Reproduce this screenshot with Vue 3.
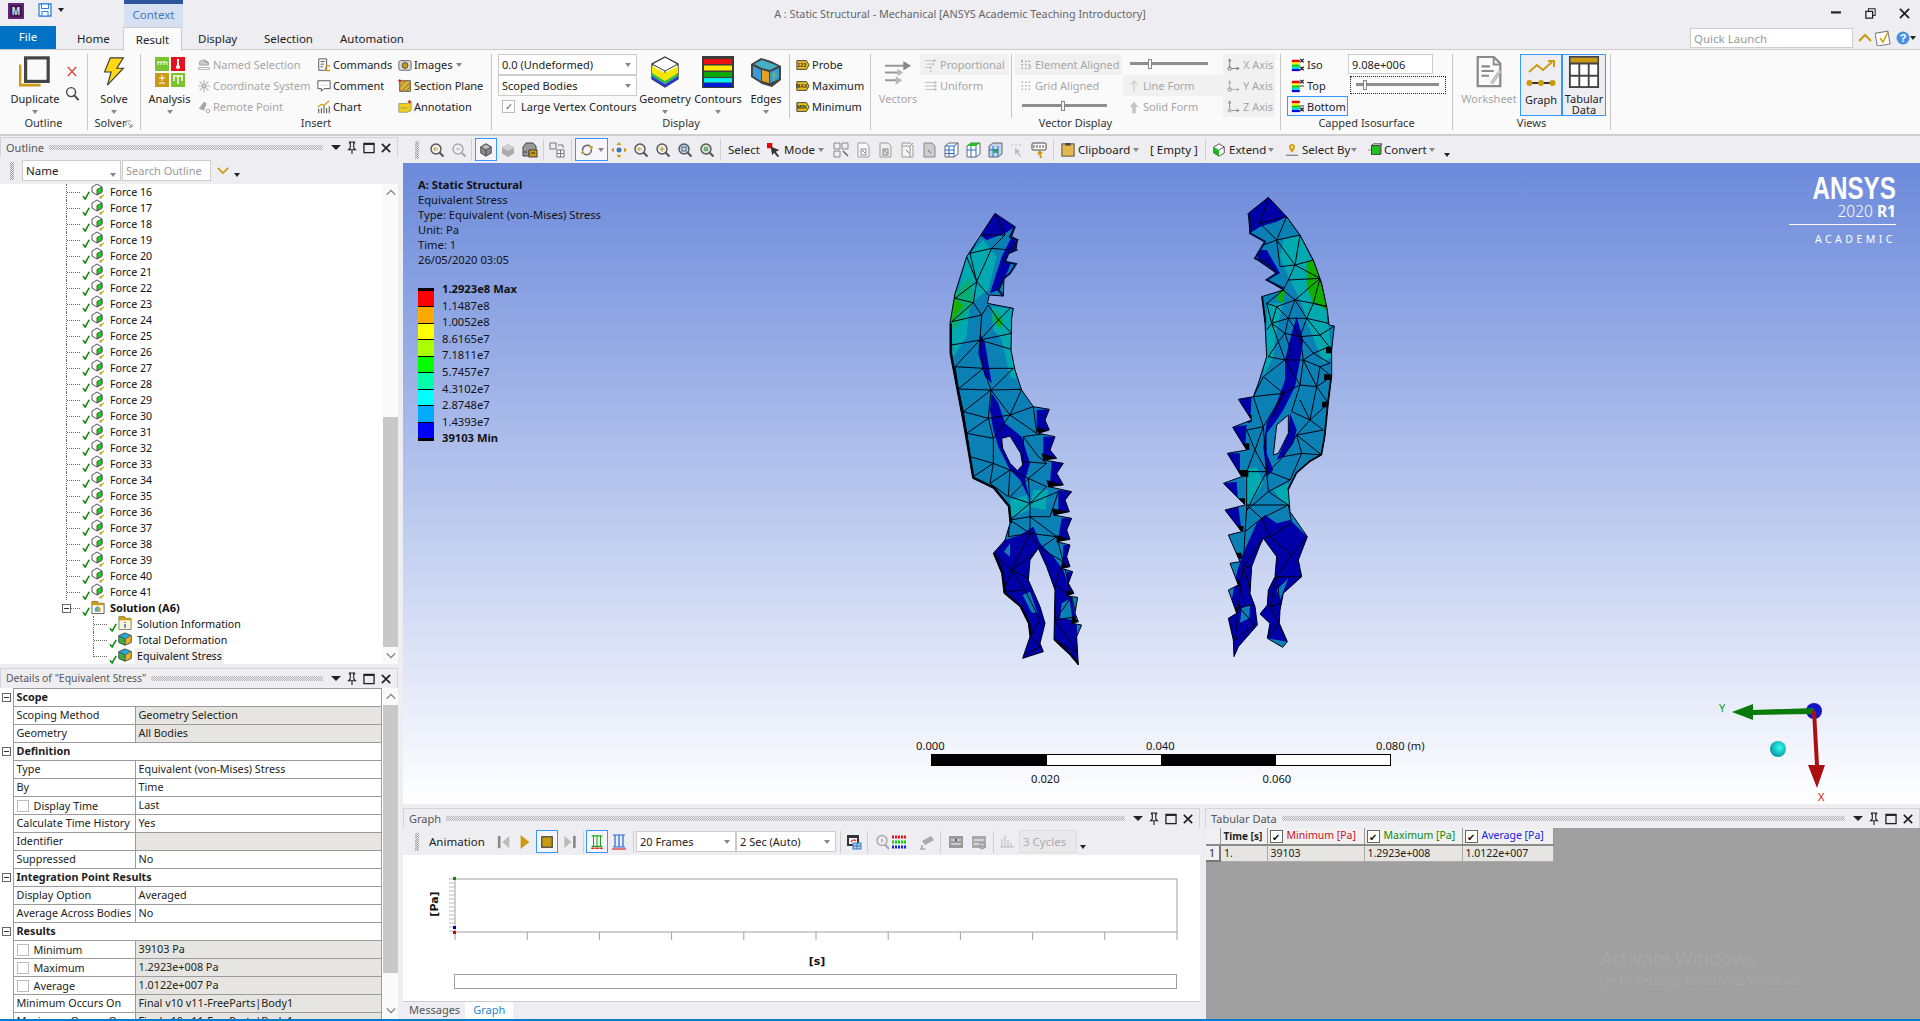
<script setup>
const forces = Array.from({ length: 26 }, (_, i) => 'Force ' + (16 + i))

const tag = (t) => `<path d="M1 3h11l3 5-3 5H1z" fill="#e8bd1c" stroke="#333"/><text x="6.5" y="10" font-size="6" font-weight="700" text-anchor="middle" font-family="Liberation Sans" fill="#333">${t}</text>`
const bands = `<rect x="1" y="2" width="9" height="3" fill="#e00"/><rect x="1" y="5" width="9" height="2.5" fill="#fe0"/><rect x="1" y="7.5" width="9" height="2.5" fill="#0c0"/><rect x="1" y="10" width="9" height="2.5" fill="#0dd"/><rect x="1" y="12.5" width="9" height="2.5" fill="#00d"/>`
const ex = (y) => `<path d="M10.5 ${y}l4 4m0-4l-4 4" stroke="#222" stroke-width="1.5"/>`
const dots = (c) => { let s = ''; for (const y of [3, 7, 11]) for (const x of [3, 7, 11]) s += `<rect x="${x}" y="${y}" width="1.6" height="1.6" fill="${c}"/>`; return s }

const ic = {
  dup: `<path d="M1 9v22h22" fill="none" stroke="#c99a12" stroke-width="3"/><rect x="7" y="2" width="24" height="25" fill="#fafafa" stroke="#444" stroke-width="3.4"/>`,
  x: `<path d="M2 2l9 10M11 2L2 12" stroke="#e33" stroke-width="1.5" fill="none"/>`,
  mag: `<circle cx="6.5" cy="6.5" r="4.8" fill="none" stroke="#444" stroke-width="1.5"/><path d="M10 10l4.5 5" stroke="#444" stroke-width="2"/>`,
  bolt: `<path d="M13 1h14l-7 11h7L10 30l4-14H7z" fill="#ffd913" stroke="#3a3a3a" stroke-width="1.2"/>`,
  analysis: `<rect x="0" y="0" width="14" height="14" fill="#7cc42e"/><path d="M2 5h10M3 5v3M6 5v3M9 5v3M12 5v3" stroke="#fff" fill="none"/><rect x="16" y="0" width="14" height="14" fill="#e8101c"/><path d="M23 2v7" stroke="#fff" stroke-width="2"/><circle cx="23" cy="10" r="2" fill="#fff"/><rect x="0" y="16" width="14" height="14" fill="#c99a12"/><path d="M4 21h6M7 18v6M4 26h6" stroke="#fff" fill="none"/><rect x="16" y="16" width="14" height="14" fill="#7cc42e"/><path d="M18 19h10M23 19v8M19 19v5M27 19v5" stroke="#fff" stroke-width="1.4" fill="none"/>`,
  named: `<path d="M3 8V4l5-2 5 3v3H3z" fill="#cfcfcf" stroke="#999"/><path d="M8 3l5 3" stroke="#888"/><rect x="2" y="11" width="12" height="2" fill="#fff" stroke="#aaa"/>`,
  coord: `<path d="M8 1v14M1 8h14M3 3l10 10M13 3L3 13" stroke="#b5b5b5" stroke-width="1.4" fill="none"/><circle cx="8" cy="8" r="1.6" fill="#fff" stroke="#999"/>`,
  remote: `<path d="M2 10l6-8 3 2-3 8z" fill="#a6a6a6"/><circle cx="12.5" cy="12.5" r="2" fill="#fff" stroke="#999"/>`,
  commands: `<path d="M2 1h9v13H2z" fill="#fff" stroke="#444"/><path d="M4 4h5M4 7h4M4 10h3" stroke="#444" fill="none"/><path d="M15 9.6a3 3 0 1 0 0 4.2" stroke="#c99a12" stroke-width="1.6" fill="none"/>`,
  comment: `<path d="M1 2h14v9H8l-3 3v-3H1z" fill="#fff" stroke="#444"/><path d="M5 7h1M8 7h1M11 7h1" stroke="#888"/>`,
  chart: `<path d="M2 15v-5M5 15V9M8 15V6M11 15V9M14 15V7" stroke="#555" stroke-width="1.2" fill="none"/><path d="M1 8l4-3 3 1 6-5" stroke="#c99a12" stroke-width="1.4" fill="none"/>`,
  images: `<rect x="1" y="3" width="14" height="11" rx="2" fill="#ddd" stroke="#555"/><circle cx="8" cy="8.5" r="3.4" fill="#c99a12" stroke="#444"/>`,
  section: `<rect x="2" y="2" width="12" height="12" fill="#d8b341" stroke="#444"/><path d="M4 14L14 4M2 9l7-7M9 14l5-5" stroke="#886600" fill="none"/><path d="M2 0v4M0 2h4" stroke="#e00"/>`,
  annot: `<path d="M1 4h10l4-2v10l-4 2H1z" fill="#efd016" stroke="#997"/><path d="M3 9h8" stroke="#996"/><path d="M13 0v4M11 2h4" stroke="#e00" stroke-width="1.2"/>`,
  probe: tag('123'), max: tag('MAX'), min: tag('MIN'),
  geom: `<path d="M16 1l13 7v15l-13 8-13-8V8z" fill="#fff" stroke="#333" stroke-width="1.3"/><path d="M3 10l13 7 13-7v7l-13 8-13-8z" fill="#f3e700"/><path d="M3 17l13 8 13-8v3l-13 8-13-8z" fill="#2fc12f"/><path d="M3 20l13 8 13-8v3l-13 8-13-8z" fill="#2438d8"/><path d="M3 8l13 7 13-7M16 15v2" fill="none" stroke="#333"/>`,
  contours: `<rect x="0" y="0" width="32" height="32" fill="#3a3a3a"/><rect x="2" y="3" width="28" height="5" fill="#ee1010"/><rect x="2" y="9.5" width="28" height="5" fill="#ffe600"/><rect x="2" y="16" width="28" height="5" fill="#0aa80a"/><rect x="2" y="22" width="28" height="4.5" fill="#0ee"/><rect x="2" y="27" width="28" height="4" fill="#0018d8"/>`,
  edges: `<path d="M1 8l10-6 10 3 10 5v14l-9 7-10-3-11-7z" fill="#444"/><path d="M3 10l8 4v11l-8-5z" fill="#3a9ad8"/><path d="M12 14l7 2v11l-7-2z" fill="#e6a020"/><path d="M20 16l9-4v11l-9 4z" fill="#3a9ad8"/><path d="M4 8l8-4 8 3 8 3-8 4-8-2z" fill="#45b0c8"/><path d="M22 19h5M24 16v9" stroke="#7c3" fill="none"/>`,
  vectors: `<path d="M0 7h21M0 14h17M0 22h14" stroke="#999" stroke-width="2" fill="none"/><path d="M19 2l8 5-8 5z" fill="#888"/><path d="M13 10l6 4-6 4z" fill="#bbb"/><path d="M11 18l7 4-7 5z" fill="#bbb"/>`,
  prop: `<path d="M1 3h11M3 7h8M1 11h7M6 15h3" stroke="#bbb" fill="none"/><path d="M11 1l3 2-3 2zM10 5l2 2-2 2zM7 9l2 2-2 2z" fill="#bbb"/>`,
  unif: `<path d="M1 4h12M1 8h12M1 12h12" stroke="#bbb" fill="none"/><path d="M12 2l3 2-3 2zM12 6l3 2-3 2zM12 10l3 2-3 2z" fill="#bbb"/>`,
  elem: dots('#999') + `<path d="M3 2l1 3M12 8l2 3" stroke="#999"/>`,
  grid: dots('#aaa'),
  line: `<path d="M8 15V3M4 7l4-5 4 5" stroke="#bbb" fill="none"/>`,
  solid: `<path d="M6 15V8H3l5-6 5 6h-3v7z" fill="#c4c4c4"/>`,
  xa: `<path d="M3 12V2M1.5 4l1.5-3 1.5 3M5 12h8M11 10.5l3 1.5-3 1.5" stroke="#777" fill="none"/><circle cx="3" cy="12" r="2" fill="none" stroke="#777"/>`,
  ya: `<path d="M3 12V3M1.5 5l1.5-3 1.5 3M5 12h8M11 10.5l3 1.5-3 1.5" stroke="#aaa" fill="none"/><circle cx="3" cy="12" r="2" fill="none" stroke="#888"/>`,
  za: `<path d="M3 12V2M1.5 4l1.5-3 1.5 3M5 12h8M11 10.5l3 1.5-3 1.5" stroke="#888" fill="none"/><circle cx="3" cy="12" r="2.4" fill="#bbb"/>`,
  iso: bands + ex(1) + ex(10),
  top: bands + ex(1) + `<path d="M10 8h5" stroke="#222"/>`,
  bot: bands + ex(10) + `<path d="M10 8h5" stroke="#222"/>`,
  ws: `<path d="M2 1h17l7 7v24H2z" fill="#fafafa" stroke="#8a8a8a" stroke-width="2.4"/><path d="M19 1v8h7" fill="none" stroke="#8a8a8a" stroke-width="2"/><path d="M6 11h9M6 16h13M6 21h8" stroke="#8a8a8a" stroke-width="2.2"/><path d="M16 28l9-13 2 1.5-9 13z" fill="#cfcfcf" stroke="#aaa"/>`,
  graph: `<path d="M3 13l8-7 6 5 9-8" fill="none" stroke="#c99a12" stroke-width="2"/><path d="M22 2h6v6" fill="none" stroke="#c99a12" stroke-width="2"/><path d="M3 24h24" stroke="#333" stroke-width="2"/><circle cx="3.5" cy="24" r="3" fill="#c99a12"/><circle cx="15" cy="24" r="3" fill="#c99a12"/><circle cx="26.5" cy="24" r="3" fill="#c99a12"/>`,
  tab: `<rect x="1" y="1" width="30" height="32" fill="#fff" stroke="#444" stroke-width="2"/><rect x="2" y="2" width="28" height="6" fill="#c99a12"/><path d="M1 8h30M1 21h30M11 8v25M21 8v25" stroke="#444" stroke-width="2" fill="none"/>`,
  zfit: `<circle cx="7" cy="7" r="5" fill="#eee" stroke="#555" stroke-width="1.4"/><path d="M10.5 10.5l4 4" stroke="#555" stroke-width="2.2"/><path d="M9 7H5M6.5 5L5 7l1.5 2" stroke="#c99a12" fill="none"/>`,
  zdim: `<circle cx="7" cy="7" r="5" fill="#eee" stroke="#aaa" stroke-width="1.4"/><path d="M10.5 10.5l4 4" stroke="#aaa" stroke-width="2.2"/><path d="M5 7h4" stroke="#aaa"/>`,
  zplus: `<circle cx="7" cy="7" r="5" fill="#eee" stroke="#555" stroke-width="1.4"/><path d="M10.5 10.5l4 4" stroke="#555" stroke-width="2.2"/><path d="M4.5 7h5M7 4.5v5" stroke="#c99a12" stroke-width="1.2"/>`,
  zbox: `<circle cx="7" cy="7" r="5" fill="#c8d4e8" stroke="#555" stroke-width="1.4"/><path d="M10.5 10.5l4 4" stroke="#555" stroke-width="2.2"/><rect x="5" y="5" width="4" height="4" fill="none" stroke="#567"/>`,
  zgreen: `<circle cx="7" cy="7" r="5" fill="#cfe0c8" stroke="#555" stroke-width="1.4"/><path d="M10.5 10.5l4 4" stroke="#555" stroke-width="2.2"/><rect x="5" y="5" width="4" height="4" fill="#7a7"/>`,
  cube: `<path d="M8 1l6 3.5v7L8 15l-6-3.5v-7z" fill="#888" stroke="#444"/><path d="M2 4.5L8 8l6-3.5-6-3.5z" fill="#bbb" stroke="#444"/><path d="M8 8v7" stroke="#444"/>`,
  cubel: `<path d="M8 2l6 3.5v6L8 15l-6-3.5v-6z" fill="#aaa"/><path d="M2 5.5L8 9l6-3.5L8 2z" fill="#d0d0d0"/>`,
  iso3: `<path d="M4 1h7l3 3v5H7v5H1V5z" fill="#999" stroke="#444"/><rect x="7" y="8" width="8" height="7" fill="#c99a12" stroke="#444"/><path d="M2 10h3M9 11h4" stroke="#333"/>`,
  view: `<rect x="1" y="1" width="6" height="6" fill="#eee" stroke="#777"/><rect x="8" y="8" width="7" height="7" fill="#fff" stroke="#777"/><path d="M8 11.5h7M11.5 8v7M9 3h5v3" stroke="#777" fill="none"/>`,
  rot: `<path d="M3 9a5.5 5.5 0 0 1 9-5M13 7a5.5 5.5 0 0 1-9 5" fill="none" stroke="#666" stroke-width="1.6"/><circle cx="13" cy="5" r="1.7" fill="#c99a12"/><circle cx="3" cy="11" r="1.7" fill="#c99a12"/>`,
  pan: `<path d="M8 0l2.5 3h-5zM8 16l2.5-3h-5zM0 8l3-2.500v5zM16 8l-3-2.500v5z" fill="#c99a12"/><circle cx="8" cy="8" r="2.500" fill="#3a78c8"/>`,
  cursor: `<rect x="0" y="0" width="6" height="6" fill="#e00"/><path d="M4 4l10 4-4 2 4 5-2 1-4-5-2 3z" fill="#333"/>`,
  p1: `<path d="M1 1h6v6H1zM9 1h6v6H9zM1 9h6v6H1z" fill="none" stroke="#888"/><path d="M10 9l5 5" stroke="#666" stroke-width="1.5"/>`,
  p2: `<path d="M3 1h8l3 3v11H3z" fill="#fff" stroke="#999"/><rect x="6" y="7" width="5" height="6" fill="none" stroke="#888"/><path d="M7 8l3 3" stroke="#777"/>`,
  p3: `<path d="M3 1h8l3 3v11H3z" fill="#eee" stroke="#999"/><rect x="6" y="7" width="5" height="6" fill="#ddd" stroke="#888"/><path d="M7 8l3 3" stroke="#777"/>`,
  p4: `<path d="M3 1h8l3 3v11H3z" fill="#f4f4f4" stroke="#999"/><path d="M3 4h8l3-3M11 4v11" stroke="#999" fill="none"/><path d="M7 8l3 3" stroke="#777"/>`,
  p5: `<path d="M3 1h8l3 3v11H3z" fill="#ccc" stroke="#888"/><path d="M7 8l3 3" stroke="#666"/>`,
  m1: `<path d="M2 4l4-3h9v11l-4 3H2z" fill="#fff" stroke="#666"/><path d="M2 8h9M6 4v11M11 4v11M2 11.500h9M2 4h9l4-3" stroke="#2a6ac8" fill="none"/>`,
  m2: `<path d="M2 4l4-3h9v11l-4 3H2z" fill="#fff" stroke="#666"/><path d="M2 4l4-3h9l-4 3z" fill="#22c01f"/><path d="M2 8h9M6 4v11M11 4v11" stroke="#2a6ac8" fill="none"/>`,
  m3: `<path d="M2 4l4-3h9v11l-4 3H2z" fill="#bfd4ef" stroke="#666"/><rect x="7" y="7" width="4" height="4" fill="#2fb52f"/><path d="M2 8h9M6 4v11M11 4v11" stroke="#2a6ac8" fill="none"/>`,
  xyz: `<path d="M2 3h12" stroke="#bbb" stroke-dasharray="2 2"/><path d="M6 6l5 3-2 1 3 4-1 1-3-4-2 2z" fill="#bbb"/>`,
  lab: `<rect x="1" y="1" width="14" height="7" rx="1" fill="#fff" stroke="#444"/><path d="M3 3v3M6 3v3M9 3v3M12 3v3" stroke="#444"/><path d="M8 8l4 3-2 1 1 4-2 0-1-4-2 1z" fill="#c99a12"/>`,
  clip: `<rect x="1" y="1" width="14" height="14" fill="#e2b94e" stroke="#444"/><rect x="5" y="0" width="6" height="3" fill="#444"/>`,
  extend: `<path d="M8 1l6 3.500v7L8 15l-6-3.500v-7z" fill="#fff" stroke="#444"/><path d="M2 4.500L8 8v7l-6-3.500z" fill="#1fb520"/><path d="M8 8l6-3.500" stroke="#444"/><path d="M8 0l2 2" stroke="#c99a12"/>`,
  sel: `<path d="M8 1a3.500 3.500 0 0 1 3.500 3.500C11.500 7 8 11 8 11S4.500 7 4.500 4.500A3.500 3.500 0 0 1 8 1z" fill="#d4a017"/><circle cx="8" cy="4.500" r="1.200" fill="#fff"/><path d="M1 14h14" stroke="#555"/>`,
  conv: `<path d="M0 8h4" stroke="#888"/><rect x="4" y="3" width="10" height="10" fill="#1cc41c" stroke="#333"/><path d="M4 3l2-2h10v10l-2 2M14 3l2-2" fill="none" stroke="#333"/>`,
  first: `<rect x="0" y="1" width="3" height="14" fill="#888"/><path d="M13 1L5 8l8 7z" fill="#bbb"/>`,
  play: `<path d="M2 0l10 8-10 8z" fill="#c99a12"/>`,
  last: `<path d="M1 1l8 7-8 7z" fill="#bbb"/><rect x="11" y="1" width="3" height="14" fill="#888"/>`,
  stop: `<rect x="2" y="2" width="12" height="12" fill="#c99a12" stroke="#444" stroke-width="1.4"/>`,
  fr1: `<path d="M2 1h12M2 13h12M4 1v12M8 1v12M12 1v12" stroke="#18a818" fill="none" stroke-width="1.2"/><path d="M2 16l1-2 1 2zM7 16l1-2 1 2zM12 16l1-2 1 2z" fill="#d00"/><rect x="1" y="14.500" width="14" height="1" fill="#d00"/>`,
  fr2: `<path d="M2 1h12M2 13h12M4 1v12M8 1v12M12 1v12" stroke="#2268d8" fill="none" stroke-width="1.2"/><rect x="1" y="14.500" width="14" height="1" fill="#d00"/>`,
  film: `<rect x="1" y="1" width="12" height="11" fill="#333"/><rect x="3" y="4" width="8" height="6" fill="#fff"/><path d="M5 8a3 3 0 0 1 5-1" stroke="#e33" stroke-width="1.4" fill="none"/><rect x="7" y="9" width="8" height="6" fill="#bcd" stroke="#37c"/><path d="M11 9v6M7 12h8" stroke="#37c"/>`,
  mg: `<circle cx="7" cy="6.500" r="5" fill="none" stroke="#aaa" stroke-width="1.4"/><path d="M10 10.500l4 4.500" stroke="#aaa" stroke-width="2"/><path d="M6 4l3 2.500-3 2.500z" fill="#bbb"/>`,
  rgb: `<path d="M1 3h14" stroke="#e11" stroke-width="3" stroke-dasharray="2 1"/><path d="M1 8h14" stroke="#1c1" stroke-width="3" stroke-dasharray="2 1"/><path d="M1 13h14" stroke="#12d" stroke-width="3" stroke-dasharray="2 1"/>`,
  cam: `<path d="M3 7l9-5 3 4-9 5z" fill="#aaa"/><path d="M3 15v-4M1 15h5" stroke="#aaa" stroke-width="1.6"/>`,
  flm: `<rect x="1" y="2" width="14" height="12" fill="#999"/><path d="M3 6h10M3 10h10" stroke="#fff"/><rect x="7" y="5" width="2" height="2" fill="#555"/>`,
  flm2: `<rect x="1" y="2" width="14" height="12" fill="#aaa"/><path d="M3 6h10M3 10h10" stroke="#fff"/><circle cx="11" cy="12" r="3" fill="none" stroke="#999"/>`,
  cyc: `<path d="M1 13h14M3 13V5M6 13V2M9 13V6M12 13V9" stroke="#bbb" fill="none"/>`,
  chevup: `<path d="M1 6l5-5 5 5" fill="none" stroke="#777" stroke-width="1.4"/>`,
  chevdn: `<path d="M1 1l5 5 5-5" fill="none" stroke="#777" stroke-width="1.4"/>`,
  pin: `<path d="M4 1h6v1h-1v6l2 2H3l2-2V2H4zM7 10v5" fill="none" stroke="#222" stroke-width="1.3"/>`,
  sq: `<rect x="1" y="2" width="11" height="10" fill="none" stroke="#222" stroke-width="1.4"/><path d="M1 3h11" stroke="#222" stroke-width="1.4"/>`,
  cls: `<path d="M2 2l9 9M11 2l-9 9" stroke="#222" stroke-width="1.8"/>`,
  ok: `<path d="M1 8l2.500 3 4.500-8" stroke="#0a8a0a" stroke-width="1.7" fill="none"/>`,
  force: `<path d="M6 1l5 3v5L6 12 1 9V4z" fill="#fff" stroke="#555"/><path d="M6 6.500V12l5-3V4z" fill="#22d022" stroke="#555"/><path d="M9 15l4-3M11 15h-2v-2" stroke="#d9a520" fill="none" stroke-width="1.2"/>`,
  folder: `<path d="M1 2h6l1 2h6v11H1z" fill="#fff" stroke="#555"/><path d="M1 2h6l1 2h6v2H1z" fill="#c99a12"/><path d="M4 9l3-2 3 2v4H4z" fill="#3ab0c8"/><path d="M7 7l3 2v4H7z" fill="#e0a020"/>`,
  info: `<path d="M1 1h6l1 2h6v12H1z" fill="#fdf6d0" stroke="#777"/><path d="M1 1h6l1 2h6v2H1z" fill="#c99a12"/><path d="M7.500 7v1M7.500 9v4" stroke="#2a6ac8" stroke-width="1.6"/>`,
  result: `<path d="M8 1l7 3v8l-7 3-7-3V4z" fill="#2ba8d8" stroke="#444"/><path d="M8 8l7-4v8l-7 3z" fill="#e8b020" stroke="#444" stroke-width=".6"/><path d="M8 8v7L1 12V4z" fill="#3fb040" stroke="#444" stroke-width=".6"/><path d="M3 6l4 2v3" stroke="#2a6ac8" fill="none"/>`,
  min_: `<path d="M0 1h9" stroke="#222" stroke-width="2"/>`,
  rest: `<rect x="1" y="4" width="8" height="8" fill="none" stroke="#222" stroke-width="1.5"/><path d="M4 4V1h8v8H9" fill="none" stroke="#222" stroke-width="1.2"/>`,
  close: `<path d="M1 1l10 10M11 1L1 11" stroke="#222" stroke-width="2"/>`,
  up: `<path d="M1 8l6-6 6 6" fill="none" stroke="#c99a12" stroke-width="2"/>`,
  chkbox: `<rect x="1" y="2" width="13" height="13" fill="#fff" stroke="#777" transform="rotate(-10 8 8)"/><path d="M5 8l3 4 5-10" stroke="#d4a017" stroke-width="1.6" fill="none"/>`,
  help: `<circle cx="7" cy="7" r="6.500" fill="#4a90e2"/><text x="7" y="11" text-anchor="middle" font-size="11" font-weight="700" font-family="Liberation Sans" fill="#fff">?</text>`,
  launch: `<path d="M0 0h8v8H0z" fill="none"/><path d="M1 1h5M1 1v5" stroke="#999"/><path d="M3 3l4 4M7 4v3H4" stroke="#888" fill="none"/>`,
  appm: `<rect width="16" height="16" fill="#68217a"/><rect x="2" y="2" width="12" height="12" fill="#3f1a4e"/><text x="8" y="12" font-size="10" font-weight="700" text-anchor="middle" font-family="Liberation Sans" fill="#ddd">M</text>`,
  save: `<path d="M1 1h12v12H1z" fill="#fff" stroke="#2f80d8" stroke-width="1.3"/><rect x="3.500" y="1" width="7" height="4.500" fill="#fff" stroke="#2f80d8"/><rect x="4" y="8.500" width="6" height="4.500" fill="#fff" stroke="#2f80d8"/>`
}

const details = [
  { s: 'Scope' },
  { l: 'Scoping Method', v: 'Geometry Selection', g: 1 },
  { l: 'Geometry', v: 'All Bodies', g: 1 },
  { s: 'Definition' },
  { l: 'Type', v: 'Equivalent (von-Mises) Stress' },
  { l: 'By', v: 'Time' },
  { l: 'Display Time', v: 'Last', c: 1 },
  { l: 'Calculate Time History', v: 'Yes' },
  { l: 'Identifier', v: '', g: 1 },
  { l: 'Suppressed', v: 'No' },
  { s: 'Integration Point Results' },
  { l: 'Display Option', v: 'Averaged' },
  { l: 'Average Across Bodies', v: 'No' },
  { s: 'Results' },
  { l: 'Minimum', v: '39103 Pa', c: 1, g: 1 },
  { l: 'Maximum', v: '1.2923e+008 Pa', c: 1, g: 1 },
  { l: 'Average', v: '1.0122e+007 Pa', c: 1, g: 1 },
  { l: 'Minimum Occurs On', v: 'Final v10 v11-FreeParts|Body1', g: 1 },
  { l: 'Maximum Occurs On', v: 'Final v10 v11-FreeParts|Body1', g: 1 }
]

const legend = [
  { t: '1.2923e8 Max', b: 1 }, { t: '1.1487e8' }, { t: '1.0052e8' }, { t: '8.6165e7' }, { t: '7.1811e7' },
  { t: '5.7457e7' }, { t: '4.3102e7' }, { t: '2.8748e7' }, { t: '1.4393e7' }, { t: '39103 Min', b: 1 }
]
const legendColors = ['#f00', '#ffaa00', '#ff0', '#aaff00', '#0f0', '#00ffaa', '#0ff', '#00aaff', '#00f']

const xTicks = Array.from({ length: 11 }, (_, i) => 52 + i * 72.2)
const yTicks = Array.from({ length: 14 }, (_, i) => 24 + i * 4)

const leftOutline = 'M195 70L255 110L245 140L262 150L258 180L235 190L225 215L258 222L240 250L222 265L220 318L178 315L172 340L250 355L245 385L243 480L255 540L275 600L310 650L358 658L345 690L358 720L325 730L375 740L360 780L380 805L340 810L400 820L380 850L400 885L355 890L425 905L405 930L418 965L370 975L425 985L410 1020L420 1048L380 1055L420 1065L410 1100L420 1130L395 1135L428 1145L415 1180L432 1210L410 1218L443 1222L435 1270L445 1295L425 1300L455 1305L440 1340L445 1425L420 1395L372 1350L375 1200L350 1130L325 1075L300 1110L295 1170L330 1250L345 1300L330 1360L340 1385L278 1405L300 1340L295 1300L270 1250L222 1210L215 1150L190 1090L225 1050L240 1000L235 950L190 895L128 865L100 700L60 490L60 400L75 310L110 200Z M215 745L240 738L272 790L278 825L262 842L240 820L218 775Z'
const leftTeal = ['110,200 160,150 200,200 175,300 120,340 110,440 70,500 60,400', '185,350 245,355 245,500 260,570 240,560 215,450 190,420', '310,900 355,900 345,960 300,950', '240,930 290,915 300,960 245,980']
const leftGreen = ['75,310 120,260 130,340 75,420 60,400', '190,350 225,390 210,420 185,390']
const leftBright = ['72,325 100,345 65,395', '195,375 218,395 205,412']
const leftDark = ['195,70 150,135 170,150 225,130 255,110', '245,140 262,160 235,240 205,300 180,310 215,200', '150,430 165,460 185,580 165,560 145,490', '185,610 205,640 225,700 275,740 300,820 285,870 300,930 270,870 240,840 205,770 190,720 180,660', '190,1090 225,1050 270,1035 310,1010 330,1060 370,1100 400,1140 420,1200 440,1300 445,1425 372,1350 375,1200 325,1075 300,1110 295,1170 330,1250 345,1300 340,1385 278,1405 300,1340 270,1250 222,1210 215,1150', '320,660 358,658 345,690 358,720 320,725', '340,740 375,740 360,780 380,805 340,800', '365,815 400,820 380,850 400,885 360,880', '385,900 425,905 405,930 418,965 385,960', '395,985 425,985 410,1020 420,1048 385,1045', '400,1065 420,1065 420,1130 398,1130', '410,1145 428,1145 432,1210 410,1210']
const leftLight = ['300,1205 322,1268 305,1268 278,1215', '395,1240 418,1228 428,1290 390,1285', '240,1060 222,1085 240,1100']
const leftBlack = ['320,710 358,722 325,730', '335,790 380,805 340,812', '350,870 400,885 355,892', '365,955 418,965 370,975', '380,1035 420,1048 380,1055', '395,1115 420,1130 395,1137', '410,1200 432,1210 410,1218', '425,1275 445,1295 425,1300']
const leftEdge = 'M60 400L60 490L100 700L128 865L190 895L235 950L240 1000M190 1090L215 1150L222 1210L270 1250L295 1300L300 1340M372 1350L420 1395L445 1425'
const leftRough = 'M255 110L240 140L262 150L245 175L258 180L235 190L225 215L258 222L240 250L222 265L205 300L220 318'
const leftMesh = 'M195 70L150 135L225 135L195 70M150 135L120 190L185 175L225 135M185 175L240 180M120 190L140 275L185 175M110 200L140 275M140 275L75 325M140 275L130 338L75 325M140 275L175 315M130 338L155 375L175 345L205 390M130 338L65 395M155 375L65 395M155 375L150 450L65 465M205 390L150 450M205 390L245 430M205 390L245 350M150 450L245 430M150 450L75 530L160 535L150 450M160 535L250 535M150 450L250 480M75 530L85 597L160 535M160 535L183 600M250 535L183 600L275 598M85 597L183 600M85 597L100 665L183 600M183 600L175 685L100 665M175 685L240 675L183 600M240 675L275 598M240 675L310 650M175 685L110 730L190 745L175 685M190 745L240 675M120 800L190 820L190 745M190 820L130 860M190 820L180 880L240 840L190 820M240 840L235 920L180 880M240 840L295 865L240 920L300 940L295 865L350 820L280 815M280 740L280 815M350 730L280 740L325 800L350 820M300 940L350 890L295 865M300 940L240 990L300 980L300 940L385 905L360 980L300 980L380 1040L300 1030L240 990M300 980L300 1030L235 1040L240 990M300 1030L245 1140L190 1090M245 1140L330 1075L300 1030M245 1140L295 1165M245 1140L220 1205L285 1200L245 1140M330 1075L400 1115L380 1040L330 1075M400 1115L375 1185L425 1220L400 1115M375 1185L375 1290L440 1280L425 1220L375 1290M375 1290L445 1390L375 1350M285 1200L330 1290L300 1340L330 1370L285 1395M110 730L120 800L110 730M110 730L100 665M310 650L320 730L240 675'

const rightOutline = 'M1015 22L1070 80L1110 135L1150 210L1175 280L1192 360L1197 405L1213 408L1205 480L1205 560L1195 640L1185 740L1175 795L1140 815L1100 850L1075 900L1080 965L1132 1040L1105 1110L1115 1160L1060 1210L1050 1260L1048 1300L1072 1355L1058 1372L1012 1345L1020 1300L990 1272L1012 1245L1015 1200L1035 1160L1040 1100L1000 1045L990 1065L965 1130L960 1210L975 1250L982 1305L925 1370L912 1400L910 1350L895 1285L920 1270L895 1200L925 1185L900 1120L930 1115L895 1035L935 1025L885 960L945 945L880 880L935 860L892 790L950 780L908 712L965 690L925 628L970 620L985 580L1010 500L1005 400L995 320L1060 300L1010 270L1040 250L975 205L990 180L1005 155L960 130L955 70Z M1075 675L1040 705L1030 795L1045 790L1075 730Z'
const rightTeal = ['1060,150 1110,135 1175,280 1195,400 1130,380 1100,310 1075,260 1050,200', '1010,340 1060,340 1040,420 1030,500 1000,560 1010,450', '1120,370 1195,400 1205,500 1180,520 1140,420', '945,840 980,830 1000,880 950,960', '1080,965 1030,900 1075,880']
const rightGreen = ['1130,215 1150,210 1170,270 1192,360 1150,340 1130,290', '1050,300 1065,300 1060,340 1040,330']
const rightDark = ['1015,22 1070,80 1040,95 990,110 960,130 955,70', '975,180 1010,180 1050,250 1010,270', '1100,380 1120,450 1110,510 1095,590 1060,660 1040,690 1010,730 1010,790 1030,840 1010,860 1000,770 1010,700 1040,640 1065,570 1065,510 1085,430', '1080,670 1100,720 1090,760 1060,800 1040,810 1075,730', '1132,1040 1105,1110 1115,1160 1060,1210 1048,1300 1072,1355 1012,1345 990,1272 1015,1200 1040,1100 1000,1045 965,1130 975,1250 982,1305 912,1400 895,1285 920,1150 935,1100 980,1000 1005,975 1040,1000 1080,990', '930,620 965,620 960,700 930,690', '910,710 950,705 945,780 910,780', '895,790 930,790 930,860 895,860', '885,880 920,875 925,945 890,945', '885,960 925,950 935,1025 895,1030']
const rightLight = ['935,1255 960,1245 958,1285 930,1298', '1040,1200 1075,1165 1050,1230']
const rightBlack = ['1188,470 1208,470 1205,490 1188,490', '1182,553 1202,553 1202,570 1182,570', '1176,635 1196,635 1196,652 1176,652', '915,760 958,760 958,780 910,780', '925,675 965,675 965,695 925,695', '900,840 955,840 955,860 895,860', '890,925 945,925 945,945 890,945', '895,1008 940,1008 940,1025 895,1025', '905,1088 935,1088 935,1106 905,1106', '905,1170 930,1170 930,1188 905,1188', '895,1252 922,1252 922,1270 895,1270']
const rightEdge = 'M1205 560L1195 640L1185 740L1175 795L1140 815L1100 850L1075 900M995 320L1005 400'
const rightRough = 'M955 70L965 100L960 130L1005 155L990 180L975 205L1005 215L1040 250L1010 270L1060 295'
const rightMesh = 'M1015 22L990 100L1070 80L1015 22M990 100L1040 150L1070 80L1110 135L1040 150M1040 150L1000 165M1040 150L1095 225L1110 135L1150 210L1095 225M1040 150L1050 230L1095 225M1095 225L1075 270L1170 265L1095 225M1150 210L1170 265M1075 270L1060 300L1095 330L1170 265L1150 340L1095 330M1170 265L1192 350L1150 340M1060 300L1010 340L1040 350L1095 330M1010 340L1025 400L1040 350L1075 385L1095 330L1130 385L1150 340L1192 350L1195 400L1130 385L1075 385M1025 400L1010 420M1025 400L1075 385L1065 430L1025 400L1045 455L1065 430L1110 440L1075 385M1130 385L1110 440L1170 435L1130 385M1170 435L1213 408M1170 435L1197 470L1150 490L1110 440L1120 510L1150 490L1200 520L1170 530L1120 510M1045 455L1015 500L1065 510L1045 455M1065 430L1085 490L1065 510L1120 510L1110 585L1065 510L1000 560L1060 610L1110 585L1160 590L1170 530L1205 560L1160 590L1120 510M1000 560L970 620L1060 610L1000 710L970 620M1060 610L1030 680M1110 585L1085 665L1140 690L1160 590L1195 640L1140 690L1110 630M1140 690L1180 720L1100 735L1140 690M1100 735L1175 795L1115 790L1100 735L1060 800L1115 790L1080 870L1015 845L1060 800M1000 710L950 720L975 780L1000 710M1000 710L1010 845L975 780L950 845L1010 845L950 960L950 845M1010 845L1015 905L950 960M1015 905L1075 945L950 945M1015 905L1080 870M950 945L995 985L1075 945M995 985L945 1025L950 960M995 985L1020 1040L1085 1000L1075 945M1020 1040L1085 1095L1132 1040M1085 1095L1040 1160L1115 1160M1020 1040L1000 1045L940 1130L945 1025M940 1130L965 1130M940 1130L925 1250L975 1245L940 1130M925 1250L975 1305L915 1350L925 1250M1040 1160L1020 1250L1050 1240L1040 1160M1020 1250L1045 1300L1015 1340M1045 1300L1072 1355'
</script>

<template>
  <div class="app">
    <!-- title -->
    <header class="titlebar">
      <div class="tb-left">
        <svg class="appm" viewBox="0 0 16 16" v-html="ic.appm"></svg>
        <svg class="save" viewBox="0 0 14 14" v-html="ic.save"></svg>
        <span class="car dk ml6"></span>
        <div class="context"><span>Context</span></div>
      </div>
      <div class="title">A : Static Structural - Mechanical [ANSYS Academic Teaching Introductory]</div>
      <div class="tb-right">
        <svg class="wc" viewBox="0 0 10 4" v-html="ic.min_"></svg>
        <svg class="wc" viewBox="0 0 13 13" v-html="ic.rest"></svg>
        <svg class="wc" viewBox="0 0 12 12" v-html="ic.close"></svg>
      </div>
    </header>
    <nav class="tabs">
      <div class="file">File</div>
      <div class="tab home">Home</div>
      <div class="tab active">Result</div>
      <div class="tab disp">Display</div>
      <div class="tab sel">Selection</div>
      <div class="tab auto">Automation</div>
      <div class="qlaunch">
        <div class="qinput">Quick Launch</div>
        <svg class="q-up" viewBox="0 0 14 10" v-html="ic.up"></svg>
        <svg class="q-chk" viewBox="0 0 16 16" v-html="ic.chkbox"></svg>
        <svg class="q-help" viewBox="0 0 14 14" v-html="ic.help"></svg>
        <span class="car dk"></span>
      </div>
    </nav>

    <!-- ribbon -->
    <section class="ribbon">
      <div class="grp g-outline">
        <div class="body pl10">
          <div class="big w50">
            <div class="big-i"><svg class="b32" viewBox="0 0 34 34" v-html="ic.dup"></svg></div>
            <div class="big-t">Duplicate</div><span class="car"></span>
          </div>
          <div class="col-x">
            <svg class="xmark" viewBox="0 0 13 14" v-html="ic.x"></svg>
            <svg class="xmag" viewBox="0 0 16 16" v-html="ic.mag"></svg>
          </div>
        </div>
        <div class="lab">Outline</div>
      </div>
      <div class="grp g-solver">
        <div class="body">
          <div class="big w52">
            <div class="big-i"><svg class="b32" viewBox="0 0 34 32" v-html="ic.bolt"></svg></div>
            <div class="big-t">Solve</div><span class="car"></span>
          </div>
        </div>
        <div class="lab">Solver<svg class="launch" viewBox="0 0 8 8" v-html="ic.launch"></svg></div>
      </div>
      <div class="grp g-insert">
        <div class="body pl8">
          <div class="big w41">
            <div class="big-i"><svg class="b30" viewBox="0 0 30 30" v-html="ic.analysis"></svg></div>
            <div class="big-t">Analysis</div><span class="car"></span>
          </div>
          <div class="col c-named">
            <div class="sm dis np"><svg class="i" viewBox="0 0 16 16" v-html="ic.named"></svg>Named Selection</div>
            <div class="sm dis np"><svg class="i" viewBox="0 0 16 16" v-html="ic.coord"></svg>Coordinate System</div>
            <div class="sm dis np"><svg class="i" viewBox="0 0 16 16" v-html="ic.remote"></svg>Remote Point</div>
          </div>
          <div class="col c-cmd">
            <div class="sm"><svg class="i" viewBox="0 0 16 16" v-html="ic.commands"></svg>Commands</div>
            <div class="sm"><svg class="i" viewBox="0 0 16 16" v-html="ic.comment"></svg>Comment</div>
            <div class="sm"><svg class="i" viewBox="0 0 16 16" v-html="ic.chart"></svg>Chart</div>
          </div>
          <div class="col">
            <div class="sm"><svg class="i" viewBox="0 0 16 16" v-html="ic.images"></svg>Images<span class="car"></span></div>
            <div class="sm"><svg class="i" viewBox="0 0 16 16" v-html="ic.section"></svg>Section Plane</div>
            <div class="sm"><svg class="i" viewBox="0 0 16 16" v-html="ic.annot"></svg>Annotation</div>
          </div>
        </div>
        <div class="lab">Insert</div>
      </div>
      <div class="grp g-display">
        <div class="body pl6">
          <div class="col c-dd">
            <div class="dd"><span>0.0 (Undeformed)</span><span class="car"></span></div>
            <div class="dd"><span>Scoped Bodies</span><span class="car"></span></div>
            <div class="chkrow"><span class="cb on">✓</span>Large Vertex Contours</div>
          </div>
          <div class="big w48 ml4">
            <div class="big-i"><svg class="b32" viewBox="0 0 32 32" v-html="ic.geom"></svg></div>
            <div class="big-t">Geometry</div><span class="car"></span>
          </div>
          <div class="big w48 ml5">
            <div class="big-i"><svg class="b32" viewBox="0 0 32 32" v-html="ic.contours"></svg></div>
            <div class="big-t">Contours</div><span class="car"></span>
          </div>
          <div class="big w32 ml8">
            <div class="big-i"><svg class="b32" viewBox="0 0 32 32" v-html="ic.edges"></svg></div>
            <div class="big-t">Edges</div><span class="car"></span>
          </div>
          <span class="vsep"></span>
          <div class="col">
            <div class="sm"><svg class="i" viewBox="0 0 16 16" v-html="ic.probe"></svg>Probe</div>
            <div class="sm"><svg class="i" viewBox="0 0 16 16" v-html="ic.max"></svg>Maximum</div>
            <div class="sm"><svg class="i" viewBox="0 0 16 16" v-html="ic.min"></svg>Minimum</div>
          </div>
        </div>
        <div class="lab">Display</div>
      </div>
      <div class="grp g-vector">
        <div class="body pl9">
          <div class="big w36 dis">
            <div class="big-i"><svg class="b28" viewBox="0 0 28 28" v-html="ic.vectors"></svg></div>
            <div class="big-t">Vectors</div>
          </div>
          <div class="col c-prop">
            <div class="sm dis hl"><svg class="i" viewBox="0 0 16 16" v-html="ic.prop"></svg>Proportional</div>
            <div class="sm dis"><svg class="i" viewBox="0 0 16 16" v-html="ic.unif"></svg>Uniform</div>
          </div>
          <span class="vsep2"></span>
          <div class="col c-elem">
            <div class="sm dis hl"><svg class="i" viewBox="0 0 16 16" v-html="ic.elem"></svg>Element Aligned</div>
            <div class="sm dis"><svg class="i" viewBox="0 0 16 16" v-html="ic.grid"></svg>Grid Aligned</div>
            <div class="slider s1"><i></i></div>
          </div>
          <div class="col c-line">
            <div class="slider s2"><i></i></div>
            <div class="sm dis hl"><svg class="i" viewBox="0 0 16 16" v-html="ic.line"></svg>Line Form</div>
            <div class="sm dis"><svg class="i" viewBox="0 0 16 16" v-html="ic.solid"></svg>Solid Form</div>
          </div>
          <div class="col c-axis hl">
            <div class="sm dis"><svg class="i" viewBox="0 0 16 16" v-html="ic.xa"></svg>X Axis</div>
            <div class="sm dis"><svg class="i" viewBox="0 0 16 16" v-html="ic.ya"></svg>Y Axis</div>
            <div class="sm dis"><svg class="i" viewBox="0 0 16 16" v-html="ic.za"></svg>Z Axis</div>
          </div>
        </div>
        <div class="lab">Vector Display</div>
      </div>
      <div class="grp g-capped">
        <div class="body pl6">
          <div class="col c-iso">
            <div class="sm"><svg class="i" viewBox="0 0 16 16" v-html="ic.iso"></svg>Iso</div>
            <div class="sm"><svg class="i" viewBox="0 0 16 16" v-html="ic.top"></svg>Top</div>
            <div class="sm selbox"><svg class="i" viewBox="0 0 16 16" v-html="ic.bot"></svg>Bottom</div>
          </div>
          <div class="col c-isoin">
            <div class="isoval">9.08e+006</div>
            <div class="slider s3"><i></i></div>
          </div>
        </div>
        <div class="lab">Capped Isosurface</div>
      </div>
      <div class="grp g-views">
        <div class="body pl8">
          <div class="big w56 dis">
            <div class="big-i"><svg class="b32" viewBox="0 0 28 34" v-html="ic.ws"></svg></div>
            <div class="big-t">Worksheet</div>
          </div>
          <div class="big vbtn vgraph">
            <div class="big-i"><svg class="b30" viewBox="0 0 30 28" v-html="ic.graph"></svg></div>
            <div class="big-t">Graph</div>
          </div>
          <div class="big vbtn vtab">
            <div class="big-i"><svg class="b32" viewBox="0 0 32 34" v-html="ic.tab"></svg></div>
            <div class="big-t two">Tabular<br>Data</div>
          </div>
        </div>
        <div class="lab">Views</div>
      </div>
    </section>

    <div class="main">
      <!-- left -->
      <aside class="left">
        <div class="phdr">
          <span class="pt">Outline</span><span class="dotgrip"></span><span class="car dk lg"></span>
          <svg class="pi" viewBox="0 0 14 16" v-html="ic.pin"></svg>
          <svg class="pi" viewBox="0 0 13 14" v-html="ic.sq"></svg>
          <svg class="pi" viewBox="0 0 13 13" v-html="ic.cls"></svg>
        </div>
        <div class="searchrow">
          <span class="grip"></span>
          <div class="namedd"><span>Name</span><span class="car"></span></div>
          <div class="searchin">Search Outline</div>
          <svg class="gold" viewBox="0 0 14 10" v-html="`<path d='M1 2l6 6 6-6' fill='none' stroke='#c99a12' stroke-width='2'/>`"></svg>
          <span class="car dk"></span>
        </div>
        <div class="treewrap">
          <div class="tree">
            <div class="row" v-for="f in forces" :key="f">
              <span class="conn"></span>
              <svg class="chk" viewBox="0 0 10 12" v-html="ic.ok"></svg>
              <svg class="ti14" viewBox="0 0 14 16" v-html="ic.force"></svg>
              <span class="rt">{{ f }}</span>
            </div>
            <div class="row sol">
              <span class="expander"></span><span class="hdot"></span>
              <svg class="chk" viewBox="0 0 10 12" v-html="ic.ok"></svg>
              <svg class="ti14" viewBox="0 0 15 16" v-html="ic.folder"></svg>
              <span class="rt bold">Solution (A6)</span>
            </div>
            <div class="row child">
              <span class="conn"></span>
              <svg class="chk" viewBox="0 0 10 12" v-html="ic.ok"></svg>
              <svg class="ti14" viewBox="0 0 15 16" v-html="ic.info"></svg>
              <span class="rt">Solution Information</span>
            </div>
            <div class="row child">
              <span class="conn"></span>
              <svg class="chk" viewBox="0 0 10 12" v-html="ic.ok"></svg>
              <svg class="ti14" viewBox="0 0 16 16" v-html="ic.result"></svg>
              <span class="rt">Total Deformation</span>
            </div>
            <div class="row child">
              <span class="conn last"></span>
              <svg class="chk" viewBox="0 0 10 12" v-html="ic.ok"></svg>
              <svg class="ti14" viewBox="0 0 16 16" v-html="ic.result"></svg>
              <span class="rt hilite">Equivalent Stress</span>
            </div>
          </div>
          <div class="sbar">
            <svg class="sarrow" viewBox="0 0 12 7" v-html="ic.chevup"></svg>
            <div class="strack t1"><div class="sthumb"></div></div>
            <svg class="sarrow" viewBox="0 0 12 7" v-html="ic.chevdn"></svg>
          </div>
        </div>

        <div class="phdr mt4">
          <span class="pt det-t">Details of "Equivalent Stress"</span><span class="dotgrip"></span><span class="car dk lg"></span>
          <svg class="pi" viewBox="0 0 14 16" v-html="ic.pin"></svg>
          <svg class="pi" viewBox="0 0 13 14" v-html="ic.sq"></svg>
          <svg class="pi" viewBox="0 0 13 13" v-html="ic.cls"></svg>
        </div>
        <div class="detwrap">
          <div class="det">
            <table class="dtab">
              <colgroup><col class="cg"><col class="c1"><col class="c2"></colgroup>
              <tbody>
                <tr v-for="(r, i) in details" :key="i">
                  <template v-if="r.s">
                    <td class="gut"><span class="expander small"></span></td>
                    <td colspan="2" class="sec">{{ r.s }}</td>
                  </template>
                  <template v-else>
                    <td class="gut"></td>
                    <td class="lbl"><span v-if="r.c" class="cb"></span>{{ r.l }}</td>
                    <td class="val" :class="{ grey: r.g }">{{ r.v }}</td>
                  </template>
                </tr>
              </tbody>
            </table>
          </div>
          <div class="sbar">
            <svg class="sarrow" viewBox="0 0 12 7" v-html="ic.chevup"></svg>
            <div class="strack t2"><div class="sthumb"></div></div>
            <svg class="sarrow" viewBox="0 0 12 7" v-html="ic.chevdn"></svg>
          </div>
        </div>
      </aside>

      <!-- right -->
      <div class="right">
        <div class="toolbar">
          <span class="grip ml12"></span>
          <svg class="ti ml7" viewBox="-3 -3 22 22" v-html="ic.zfit"></svg>
          <svg class="ti" viewBox="-3 -3 22 22" v-html="ic.zdim"></svg>
          <span class="sep ml1"></span>
          <span class="selb w22 ml3"><svg class="i" viewBox="0 0 16 16" v-html="ic.cube"></svg></span>
          <svg class="ti" viewBox="-3 -3 22 22" v-html="ic.cubel"></svg>
          <svg class="ti" viewBox="-3 -3 22 22" v-html="ic.iso3"></svg>
          <span class="sep ml2"></span>
          <svg class="ti ml2" viewBox="-3 -3 22 22" v-html="ic.view"></svg>
          <span class="sep ml3"></span>
          <span class="selb w33 ml3"><svg class="i" viewBox="0 0 16 16" v-html="ic.rot"></svg><span class="car ml4"></span></span>
          <svg class="ti" viewBox="-3 -3 22 22" v-html="ic.pan"></svg>
          <svg class="ti" viewBox="-3 -3 22 22" v-html="ic.zfit"></svg>
          <svg class="ti" viewBox="-3 -3 22 22" v-html="ic.zplus"></svg>
          <svg class="ti" viewBox="-3 -3 22 22" v-html="ic.zbox"></svg>
          <svg class="ti" viewBox="-3 -3 22 22" v-html="ic.zgreen"></svg>
          <span class="sep ml2"></span>
          <span class="tt w31 ml7">Select</span>
          <svg class="i ml8" viewBox="0 0 16 16" v-html="ic.cursor"></svg>
          <span class="tt w31 ml3">Mode</span><span class="car ml3"></span>
          <svg class="ti ml6" viewBox="-3 -3 22 22" v-html="ic.p1"></svg>
          <svg class="ti" viewBox="-3 -3 22 22" v-html="ic.p2"></svg>
          <svg class="ti" viewBox="-3 -3 22 22" v-html="ic.p3"></svg>
          <svg class="ti" viewBox="-3 -3 22 22" v-html="ic.p4"></svg>
          <svg class="ti" viewBox="-3 -3 22 22" v-html="ic.p5"></svg>
          <svg class="ti" viewBox="-3 -3 22 22" v-html="ic.m1"></svg>
          <svg class="ti" viewBox="-3 -3 22 22" v-html="ic.m2"></svg>
          <svg class="ti" viewBox="-3 -3 22 22" v-html="ic.m3"></svg>
          <svg class="ti" viewBox="-3 -3 22 22" v-html="ic.xyz"></svg>
          <svg class="ti" viewBox="-3 -3 22 22" v-html="ic.lab"></svg>
          <span class="sep ml3"></span>
          <svg class="i ml7" viewBox="0 0 16 16" v-html="ic.clip"></svg>
          <span class="tt w52 ml3">Clipboard</span><span class="car ml3"></span>
          <span class="tt w47 ml11">[ Empty ]</span>
          <span class="sep ml8"></span>
          <svg class="i ml6" viewBox="0 0 16 16" v-html="ic.extend"></svg>
          <span class="tt w36 ml3">Extend</span><span class="car ml3"></span>
          <svg class="i ml11" viewBox="0 0 16 16" v-html="ic.sel"></svg>
          <span class="tt w46 ml3">Select By</span><span class="car ml3"></span>
          <svg class="i ml11" viewBox="0 0 16 16" v-html="ic.conv"></svg>
          <span class="tt w42 ml2">Convert</span><span class="car ml3"></span>
          <span class="car dk ml9 low"></span>
        </div>

        <div class="viewport">
          <div class="vinfo">
            <div class="bold">A: Static Structural</div>
            <div>Equivalent Stress</div>
            <div>Type: Equivalent (von-Mises) Stress</div>
            <div>Unit: Pa</div>
            <div>Time: 1</div>
            <div>26/05/2020 03:05</div>
          </div>
          <div class="legend">
            <div class="lbar">
              <div class="lc" v-for="c in legendColors" :key="c" :style="{ background: c }"></div>
            </div>
            <div class="ltext">
              <div v-for="l in legend" :key="l.t" :class="{ bold: l.b }">{{ l.t }}</div>
            </div>
          </div>

          <svg class="model" viewBox="0 0 1440 1440">
            <defs>
              <clipPath id="clipL"><path :d="leftOutline" clip-rule="evenodd"/></clipPath>
              <clipPath id="clipR"><path :d="rightOutline" clip-rule="evenodd"/></clipPath>
            </defs>
            <g clip-path="url(#clipL)">
              <rect x="0" y="0" width="700" height="1440" fill="#0a80b4"/>
              <polygon v-for="p in leftTeal" :key="p" :points="p" fill="#00aab0"/>
              <polygon v-for="p in leftGreen" :key="p" :points="p" fill="#08ac74"/>
              <polygon v-for="p in leftBright" :key="p" :points="p" fill="#18b000"/>
              <polygon v-for="p in leftDark" :key="p" :points="p" fill="#0000a8"/>
              <polygon v-for="p in leftLight" :key="p" :points="p" fill="#0a80b4"/>
              <polygon v-for="p in leftBlack" :key="p" :points="p" fill="#000"/>
              <path :d="leftMesh" fill="none" stroke="#001" stroke-width="3"/>
              <path :d="leftEdge" fill="none" stroke="#000" stroke-width="12"/>
            </g>
            <path :d="leftOutline" fill="none" stroke="#001" stroke-width="3"/>
            <path :d="leftRough" fill="none" stroke="#001040" stroke-width="6"/>
            <g clip-path="url(#clipR)">
              <rect x="700" y="0" width="740" height="1440" fill="#0a80b4"/>
              <polygon v-for="p in rightTeal" :key="p" :points="p" fill="#00aab0"/>
              <polygon v-for="p in rightGreen" :key="p" :points="p" fill="#10b000"/>
              <polygon v-for="p in rightDark" :key="p" :points="p" fill="#0000a8"/>
              <polygon v-for="p in rightLight" :key="p" :points="p" fill="#0a80b4"/>
              <polygon v-for="p in rightBlack" :key="p" :points="p" fill="#000"/>
              <path :d="rightMesh" fill="none" stroke="#001" stroke-width="3"/>
              <path :d="rightEdge" fill="none" stroke="#000" stroke-width="8"/>
            </g>
            <path :d="rightOutline" fill="none" stroke="#001" stroke-width="3"/>
            <path :d="rightRough" fill="none" stroke="#001040" stroke-width="6"/>
          </svg>

          <div class="logo">
            <div class="l1">ANSYS</div>
            <div class="l2">2020 <b>R1</b></div>
            <div class="l3">ACADEMIC</div>
          </div>

          <div class="scale">
            <div class="sc-top">
              <span>0.000</span><span>0.040</span><span class="sc-end">0.080 (m)</span>
            </div>
            <div class="sc-bar"><i></i><i></i><i></i><i></i></div>
            <div class="sc-bot"><span>0.020</span><span>0.060</span></div>
          </div>

          <svg class="triad" viewBox="0 0 120 110">
            <defs>
              <radialGradient id="ball" cx=".6" cy=".4" r=".7"><stop offset="0" stop-color="#3fe"/><stop offset="1" stop-color="#089"/></radialGradient>
            </defs>
            <circle cx="96" cy="18" r="8" fill="#1414c8"/>
            <path d="M96 15L35 17V11L14 19L35 27V22L96 21Z" fill="#0a7a0a"/>
            <path d="M94 18L97 72H90L99 95L107 72H101L98 18Z" fill="#aa1010"/>
            <circle cx="60" cy="56" r="8" fill="url(#ball)"/>
            <text x="1" y="19" class="ty">Y</text>
            <text x="100" y="108" class="tx">X</text>
          </svg>
        </div>

        <div class="bottom">
          <section class="graph">
            <div class="phdr">
              <span class="pt">Graph</span><span class="dotgrip"></span><span class="car dk lg"></span>
              <svg class="pi" viewBox="0 0 14 16" v-html="ic.pin"></svg>
              <svg class="pi" viewBox="0 0 13 14" v-html="ic.sq"></svg>
              <svg class="pi" viewBox="0 0 13 13" v-html="ic.cls"></svg>
            </div>
            <div class="toolbar">
              <span class="grip ml12"></span>
              <span class="tt w56 ml10">Animation</span>
              <svg class="i ml9" viewBox="0 0 14 16" v-html="ic.first"></svg>
              <svg class="i ml7" viewBox="0 0 14 16" v-html="ic.play"></svg>
              <span class="selb w22 ml4"><svg class="i" viewBox="0 0 16 16" v-html="ic.stop"></svg></span>
              <svg class="i ml5" viewBox="0 0 15 16" v-html="ic.last"></svg>
              <span class="sep ml6"></span>
              <span class="selb w22 ml2"><svg class="i" viewBox="0 0 16 16" v-html="ic.fr1"></svg></span>
              <svg class="ti" viewBox="-3 -3 22 22" v-html="ic.fr2"></svg>
              <span class="sep ml3"></span>
              <div class="dd w100 ml2"><span>20 Frames</span><span class="car"></span></div>
              <div class="dd w100"><span>2 Sec (Auto)</span><span class="car"></span></div>
              <span class="sep ml4"></span>
              <svg class="ti ml2" viewBox="-3 -3 22 22" v-html="ic.film"></svg>
              <span class="sep ml2"></span>
              <svg class="i16 ml7" viewBox="0 0 16 16" v-html="ic.mg"></svg>
              <svg class="i16" viewBox="0 0 16 16" v-html="ic.rgb"></svg>
              <svg class="i16 ml12" viewBox="0 0 16 16" v-html="ic.cam"></svg>
              <span class="sep ml5"></span>
              <svg class="i16 ml7" viewBox="0 0 16 16" v-html="ic.flm"></svg>
              <svg class="i16 ml7" viewBox="0 0 16 16" v-html="ic.flm2"></svg>
              <span class="sep ml6"></span>
              <svg class="i16 ml5" viewBox="0 0 16 16" v-html="ic.cyc"></svg>
              <div class="cycles ml4">3 Cycles</div>
              <span class="car dk ml3 low"></span>
            </div>
            <svg class="plot" viewBox="0 0 797 146" width="797" height="146">
              <rect x="0" y="0" width="797" height="146" fill="#fff"/>
              <path d="M52 24H774V77H52Z" fill="none" stroke="#a0a0a0" stroke-width="1"/>
              <path v-for="x in xTicks" :key="x" :d="`M${x} 77V85`" stroke="#a0a0a0" stroke-width="1"/>
              <path v-for="y in yTicks" :key="y" :d="`M46 ${y}H52`" stroke="#bbb" stroke-width="1"/>
              <rect x="50" y="22" width="3" height="3" fill="#0a8a0a"/>
              <rect x="50" y="71" width="3" height="3" fill="#00c"/>
              <rect x="50" y="76" width="3" height="3" fill="#c00"/>
              <text x="0" y="0" class="axis" transform="translate(35 49) rotate(-90)" text-anchor="middle">[Pa]</text>
              <text x="414" y="110" class="axis" text-anchor="middle">[s]</text>
              <rect x="51.500" y="119.500" width="722" height="14" fill="#fff" stroke="#a0a0a0"/>
            </svg>
            <div class="gtabs">
              <span class="gt">Messages</span>
              <span class="gt on">Graph</span>
            </div>
          </section>
          <section class="tabular">
            <div class="phdr">
              <span class="pt">Tabular Data</span><span class="dotgrip"></span><span class="car dk lg"></span>
              <svg class="pi" viewBox="0 0 14 16" v-html="ic.pin"></svg>
              <svg class="pi" viewBox="0 0 13 14" v-html="ic.sq"></svg>
              <svg class="pi" viewBox="0 0 13 13" v-html="ic.cls"></svg>
            </div>
            <div class="tgrey">
              <table class="ttab">
                <colgroup><col class="t0"><col class="t1c"><col class="t2c"><col class="t3c"><col class="t4c"></colgroup>
                <thead>
                  <tr>
                    <th></th>
                    <th class="bk">Time [s]</th>
                    <th><span class="cbk">✔</span><span class="red">Minimum [Pa]</span></th>
                    <th><span class="cbk">✔</span><span class="grn">Maximum [Pa]</span></th>
                    <th><span class="cbk">✔</span><span class="blu">Average [Pa]</span></th>
                  </tr>
                </thead>
                <tbody>
                  <tr>
                    <td class="n">1</td><td>1.</td><td>39103</td><td>1.2923e+008</td><td>1.0122e+007</td>
                  </tr>
                </tbody>
              </table>
              <div class="activate">
                <div class="a1">Activate Windows</div>
                <div class="a2">Go to Settings to activate Windows.</div>
              </div>
            </div>
          </section>
        </div>
      </div>
    </div>
    <div class="status"></div>
  </div>
</template>

<style>
html, body { margin: 0; padding: 0; overflow: hidden; background: #eeeef2; }
</style>

<style scoped>
.app { width: 1920px; height: 1021px; display: flex; flex-direction: column; overflow: hidden; background: #eeeef2; font-family: "Noto Sans", "Open Sans", sans-serif; font-size: 11px; color: #222; line-height: 1; }
.bold { font-weight: 700; }
.ml1{margin-left:1px}.ml2{margin-left:2px}.ml3{margin-left:3px}.ml4{margin-left:4px}.ml5{margin-left:5px}.ml6{margin-left:6px}.ml7{margin-left:7px}.ml8{margin-left:8px}.ml9{margin-left:9px}.ml10{margin-left:10px}.ml11{margin-left:11px}.ml12{margin-left:12px}.mt4{margin-top:4px}
.car { display: inline-block; width: 0; height: 0; border-left: 3.5px solid transparent; border-right: 3.5px solid transparent; border-top: 4px solid #888; flex: none; }
.car.dk { border-top-color: #222; }
.car.lg { border-left-width: 5px; border-right-width: 5px; border-top-width: 5px; }
.car.low { align-self: flex-end; margin-bottom: 6px; }
.dis { color: #a6a6a6; }

/* title */
.titlebar { height: 27px; display: grid; grid-template-columns: 1fr auto 1fr; flex: none; }
.tb-left { display: flex; align-items: flex-start; }
.appm { width: 16px; height: 16px; margin: 3px 0 0 8px; }
.save { width: 14px; height: 14px; margin: 3px 0 0 14px; }
.tb-left .car { margin-top: 8px; margin-left: 6px; }
.context { width: 59px; height: 23px; border-top: 4px solid #2b579a; background: #d5e1f2; color: #3d78bd; margin-left: 60px; text-align: center; line-height: 22px; font-size: 11.500px; }
.title { color: #666; font-size: 10.800px; line-height: 28px; width: 372px; white-space: nowrap; text-align: center; }
.tb-right { display: flex; justify-content: flex-end; align-items: center; gap: 18px; padding: 0 10px 0 0; height: 27px; }
.wc { width: 11px; height: 11px; margin-left: 5px; }

.tabs { height: 22px; display: flex; position: relative; z-index: 2; flex: none; }
.file { width: 56px; height: 23px; margin-top: -1px; background: #0072c6; color: #fff; text-align: center; line-height: 22px; font-size: 11.500px; }
.tab { line-height: 24px; font-size: 11.500px; height: 22px; text-align: center; }
.home { margin-left: 21px; width: 30px; }
.active { margin-left: 16px; width: 57px; height: 23px; background: #fafafa; border: 1px solid #ccc; border-bottom: none; line-height: 23px; }
.disp { margin-left: 16px; width: 37px; }
.sel { margin-left: 29px; width: 47px; }
.auto { margin-left: 29px; width: 61px; }
.qlaunch { margin-left: auto; display: flex; align-items: center; height: 21px; padding-right: 4px; }
.qinput { width: 158px; height: 18px; box-sizing: content-box; border: 1px solid #ccc; background: #fff; color: #9a9a9a; line-height: 19px; padding-left: 3px; font-size: 11.500px; margin-right: 4px; }
.q-up { width: 14px; height: 10px; margin-left: 1px; }
.q-chk { width: 16px; height: 16px; margin-left: 3px; }
.q-help { width: 14px; height: 14px; margin-left: 5px; }

/* ribbon */
.ribbon { height: 87px; flex: none; box-sizing: border-box; background: #fafafa; border-top: 1px solid #ccc; border-bottom: 2px solid #cfcfcf; display: flex; }
.grp { box-sizing: border-box; height: 76px; margin-top: 4px; border-right: 1px solid #c6c6c6; display: flex; flex-direction: column; flex: none; }
.g-outline { width: 88px; } .g-solver { width: 53px; } .g-insert { width: 351px; } .g-display { width: 379px; } .g-vector { width: 410px; } .g-capped { width: 172px; } .g-views { width: 158px; }
.body { height: 63px; display: flex; flex: none; }
.pl6 { padding-left: 6px; } .pl8 { padding-left: 8px; } .pl9 { padding-left: 9px; } .pl10 { padding-left: 10px; }
.lab { height: 13px; line-height: 12px; text-align: center; font-size: 11px; color: #333; position: relative; }
.launch { width: 8px; height: 8px; margin-left: -1px; vertical-align: -1px; }
.big { display: flex; flex-direction: column; align-items: center; flex: none; }
.big-i { height: 36px; display: flex; align-items: center; justify-content: center; }
.big-t { height: 18px; line-height: 18px; font-size: 11px; white-space: nowrap; }
.big .car { margin-top: 2px; }
.two { line-height: 11px; padding-top: 4px; height: auto; text-align: center; }
.w50{width:50px}.w52{width:52px}.w41{width:41px}.w48{width:48px}.w32{width:32px}.w36{width:36px}.w56{width:56px}
.b32 { width: 32px; height: 32px; } .b30 { width: 30px; height: 30px; } .b28 { width: 27px; height: 27px; }
.col-x { width: 24px; display: flex; flex-direction: column; align-items: center; margin-left: 0; }
.xmark { width: 12px; height: 13px; margin-top: 11px; }
.xmag { width: 15px; height: 15px; margin-top: 8px; }
.col { display: flex; flex-direction: column; flex: none; }
.c-named { width: 120px; margin-left: 7px; }
.c-cmd { width: 81px; }
.sm { height: 21px; display: flex; align-items: center; gap: 2px; font-size: 11px; white-space: nowrap; flex: none; }
.sm .car { margin-left: 2px; }
.i { width: 14px; height: 14px; flex: none; }
.i16 { width: 16px; height: 16px; flex: none; }
.c-dd { width: 139px; }
.dd { box-sizing: border-box; height: 21px; background: #fff; border: 1px solid #ccc; display: flex; align-items: center; justify-content: space-between; padding: 0 5px 0 3px; font-size: 11px; }
.w100 { width: 100px; flex: none; }
.chkrow { height: 21px; display: flex; align-items: center; gap: 6px; padding-left: 4px; font-size: 11px; white-space: nowrap; }
.cb { display: inline-block; width: 11px; height: 11px; border: 1px solid #b8b8c8; background: #fff; flex: none; text-align: center; line-height: 11px; font-size: 10px; color: #666; margin-right: 5px; vertical-align: -2px; }
.chkrow .cb { margin-right: 0; }
.vsep { width: 1px; height: 64px; background: #c6c6c6; margin: 0 6px 0 7px; flex: none; }
.vsep2 { width: 1px; height: 64px; background: #c6c6c6; margin: 0 3px 0 2px; flex: none; }
.c-prop { width: 89px; margin-left: 4px; }
.c-elem { width: 107px; }
.c-line { width: 100px; margin-left: 1px; }
.c-axis { width: 52px; height: 63px; }
.hl { background: #f1f1f1; }
.sm.dis .i { margin-left: 4px; }
.sm.dis.np .i { margin-left: 0; }
.slider { height: 21px; position: relative; flex: none; }
.slider::before { content: ""; position: absolute; left: 7px; right: 15px; top: 8px; height: 3px; background: #8e8e8e; }
.slider i { position: absolute; top: 5px; width: 4px; height: 10px; background: #f4f4f4; border: 1px solid #888; box-sizing: border-box; }
.s1 i { left: 46px; } .s2 i { left: 25px; }
.s3 { border: 1px dotted #222; box-sizing: border-box; height: 18px; margin-top: 2px; margin-left: 2px; width: 96px; }
.s3::before { right: 6px; left: 5px; top: 6px; }
.s3 i { left: 12px; top: 3px; }
.c-iso { width: 61px; }
.selbox { border: 1px solid #3399ff; box-sizing: border-box; background: #f4f7fb; padding-left: 3px; height: 20px; }
.c-iso .sm:not(.selbox) { padding-left: 4px; }
.isoval { width: 85px; height: 20px; box-sizing: border-box; border: 1px solid #ccc; background: #fff; line-height: 19px; padding-left: 3px; font-size: 11px; }
.w56 { margin-right: 3px; }
.vbtn { box-sizing: border-box; height: 62px; border: 1px solid #3399ff; background: #eeeef2; }
.vgraph { width: 42px; } .vtab { width: 44px; margin-left: 0; }

/* main */
.main { height: 883px; display: flex; flex: none; }
.left { width: 403px; box-sizing: border-box; padding-top: 1px; display: flex; flex-direction: column; flex: none; }
.right { width: 1517px; display: flex; flex-direction: column; flex: none; }

.phdr { box-sizing: border-box; height: 20px; display: flex; align-items: center; padding: 0 5px 0 5px; border: 1px solid #d4d4d8; border-bottom: none; background: #eeeef2; flex: none; }
.left .phdr { width: 398px; }
.pt { color: #555; font-size: 11px; white-space: nowrap; }
.det-t { font-size: 10.400px; }
.dotgrip { flex: 1; height: 5px; margin: 0 8px 0 5px; background: repeating-conic-gradient(#b4b4b4 0 25%, transparent 0 50%) 0 0 / 2px 2px; }
.pi { width: 12px; height: 14px; margin-left: 5px; flex: none; }

.searchrow { height: 27px; width: 398px; display: flex; align-items: center; flex: none; }
.grip { display: block; width: 4px; height: 18px; background: repeating-conic-gradient(#9c9c9c 0 25%, transparent 0 50%) 0 0 / 2px 2px; flex: none; }
.searchrow .grip { margin-left: 10px; }
.namedd { width: 99px; height: 21px; box-sizing: border-box; background: #fff; border: 1px solid #ccc; margin-left: 8px; display: flex; align-items: center; justify-content: space-between; padding: 0 4px 0 3px; font-size: 11.500px; }
.searchin { width: 89px; height: 21px; box-sizing: border-box; background: #fff; border: 1px solid #ccc; margin-left: 1px; line-height: 19px; color: #999; padding-left: 3px; font-size: 11px; white-space: nowrap; }
.gold { width: 12px; height: 9px; margin-left: 6px; }
.searchrow .car { margin-left: 5px; margin-top: 8px; }

.treewrap { height: 480px; display: flex; flex: none; width: 398px; background: #fff; }
.tree { flex: 1; overflow: hidden; }
.row { height: 16px; display: flex; align-items: center; padding-left: 66px; white-space: nowrap; font-size: 10.600px; color: #111; }
.conn { width: 14px; height: 16px; box-sizing: border-box; border-left: 1px dotted #666; position: relative; flex: none; }
.conn::after { content: ""; position: absolute; left: 0; right: 0; top: 8px; border-top: 1px dotted #666; }
.conn.last { height: 9px; align-self: flex-start; }
.chk { width: 9px; height: 11px; margin: 4px 0 0 2px; flex: none; }
.ti14 { width: 14px; height: 16px; flex: none; margin-top: -2px; }
.rt { margin-left: 5px; line-height: 16px; }
.rt.bold { font-size: 11px; }
.sol { padding-left: 62px; }
.expander { display: inline-block; box-sizing: border-box; width: 9px; height: 9px; border: 1px solid #666; background: #fff; position: relative; flex: none; }
.expander::after { content: ""; position: absolute; left: 1px; right: 1px; top: 3px; height: 1px; background: #333; }
.hdot { width: 9px; border-top: 1px dotted #666; flex: none; }
.child { padding-left: 93px; }
.hilite { background: #f0f0f0; padding: 0 2px; margin-left: 3px; }
.sbar { width: 15px; background: #fafafa; display: flex; flex-direction: column; align-items: center; flex: none; }
.sarrow { width: 10px; height: 7px; margin: 5px 0; flex: none; }
.strack { flex: 1; width: 100%; display: flex; flex-direction: column; justify-content: flex-end; }
.t1 .sthumb { height: 230px; background: #c8c8c8; }
.t2 { justify-content: flex-start; }
.t2 .sthumb { height: 268px; background: #c8c8c8; }

.detwrap { flex: 1; width: 398px; display: flex; background: #fff; min-height: 0; overflow: hidden; }
.det { flex: 1; overflow: hidden; }
.dtab { border-collapse: collapse; table-layout: fixed; width: 381px; font-size: 10.800px; color: #222; }
.cg { width: 13px; } .c1 { width: 122px; } .c2 { width: 246px; }
.dtab td { height: 18px; box-sizing: border-box; padding: 0 3px; border: 1px solid #9b9b9b; white-space: nowrap; overflow: hidden; }
.dtab td.gut { border: none; padding: 0 0 0 2px; background: #fff; }
.expander.small { display: block; }
.sec { font-weight: 700; }
.grey { background: #e6e5e1; }
.lbl .cb { width: 10px; height: 10px; border-color: #bbb; margin-right: 5px; }

/* toolbar */
.toolbar { height: 27px; display: flex; align-items: center; background: #eeeef2; flex: none; }
.ti { width: 22px; height: 22px; flex: none; }
.sep { width: 1px; height: 22px; background: #cfcfcf; flex: none; }
.selb { height: 23px; box-sizing: border-box; border: 1px solid #3399ff; display: flex; align-items: center; justify-content: center; flex: none; background: #f6f6fa; }
.w22 { width: 22px; } .w33 { width: 33px; }
.tt { font-size: 11.500px; white-space: nowrap; flex: none; }
.w31{width:31px}.w52{width:52px}.w47{width:47px}.w46{width:46px}.w42{width:42px}
.cycles { width: 58px; height: 23px; box-sizing: border-box; background: #e9e9ec; border: 1px solid #ddd; color: #aaa; line-height: 21px; padding-left: 3px; font-size: 11.500px; flex: none; }

/* viewport */
.viewport { height: 641px; position: relative; overflow: hidden; background: linear-gradient(to bottom, #6c8adb 0%, #ffffff 100%); flex: none; font-size: 11.200px; color: #111; }
.vinfo { position: absolute; left: 15px; top: 14px; line-height: 15px; white-space: nowrap; }
.legend { position: absolute; left: 15px; top: 125px; display: flex; }
.lbar { width: 16px; height: 153px; box-sizing: border-box; background: #000; border-top: 3px solid #000; border-bottom: 3px solid #000; display: flex; flex-direction: column; gap: 1px; }
.lc { flex: 1; }
.ltext { margin-left: 8px; line-height: 16.600px; margin-top: -7px; white-space: nowrap; }
.model { position: absolute; left: 527px; top: 27px; width: 480px; height: 480px; }
.logo { position: absolute; right: 24px; top: 13px; color: #fff; text-align: right; white-space: nowrap; }
.l1 { font: 700 31px/26px "Liberation Sans Narrow", "Liberation Sans", sans-serif; transform: scaleX(.78); transform-origin: right; letter-spacing: 0; }
.l2 { font-size: 15.500px; line-height: 17px; font-weight: 300; margin-top: 1px; }
.l2 b { font-weight: 700; }
.l3 { font-size: 10.500px; letter-spacing: 3.500px; margin-top: 4px; padding-top: 9px; border-top: 1px solid #fff; margin-right: 0; }
.scale { position: absolute; left: 528px; top: 575px; width: 460px; color: #111; }
.sc-top { position: relative; height: 16px; display: flex; }
.sc-top span { width: 230px; flex: none; margin-left: -15px; margin-right: 15px; line-height: 15px; white-space: nowrap; }
.sc-top .sc-end { width: auto; }
.sc-bar { height: 12px; box-sizing: border-box; border: 1px solid #000; display: grid; grid-template-columns: repeat(4, 1fr); }
.sc-bar i:nth-child(odd) { background: #000; }
.sc-bar i:nth-child(even) { background: #fff; }
.sc-bot { display: flex; margin-top: 7px; padding-left: 100px; gap: 203px; }
.triad { position: absolute; left: 1315px; top: 530px; width: 120px; height: 110px; overflow: visible; }
.ty { fill: #0a9a0a; font: 11px "Noto Sans", sans-serif; }
.tx { fill: #e01010; font: 11px "Noto Sans", sans-serif; }

.bottom { height: 211px; margin-top: 4px; display: flex; gap: 5px; flex: none; }
.graph { width: 797px; display: flex; flex-direction: column; flex: none; }
.plot { display: block; flex: none; }
.axis { font: 700 11px "DejaVu Sans", sans-serif; fill: #111; }
.gtabs { height: 18px; display: flex; align-items: stretch; padding-left: 3px; background: #eeeef2; border-top: 1px solid #ccc; flex: none; box-sizing: border-box; }
.gt { line-height: 16px; padding: 0 3px; color: #555; font-size: 11px; }
.gt.on { background: #fff; color: #1e88d0; margin-left: 2px; padding: 0 8px; }
.tabular { flex: 1; display: flex; flex-direction: column; min-width: 0; }
.tabular .phdr { margin-left: 0; }
.tgrey { flex: 1; background: #a0a0a0; position: relative; overflow: hidden; margin-left: 1px; }
.ttab { border-collapse: collapse; table-layout: fixed; width: 347px; font-size: 10.500px; color: #222; }
.t0 { width: 14px; } .t1c { width: 47px; } .t2c { width: 97px; } .t3c { width: 98px; } .t4c { width: 91px; }
.ttab th { height: 17px; box-sizing: border-box; background: #f0f0f0; border-right: 1px solid #9a9a9a; border-bottom: 2px solid #8a8a8a; font-weight: 400; padding: 0 2px; text-align: left; white-space: nowrap; }
.ttab th.bk { font-weight: 700; font-size: 10px; padding-left: 3px; }
.ttab td { height: 16px; box-sizing: border-box; background: #e6e5e1; border-right: 1px solid #aaa; border-bottom: 1px solid #aaa; padding: 0 3px; white-space: nowrap; }
.ttab td.n { background: #f0f0f0; border-right: 2px solid #777; border-bottom: 2px solid #777; padding: 0 0 0 3px; }
.cbk { display: inline-block; width: 13px; height: 13px; border: 1px solid #666; background: #fff; line-height: 12px; font-size: 10px; text-align: center; margin-right: 4px; color: #111; vertical-align: -2px; box-sizing: border-box; }
.red { color: #c8102a; } .grn { color: #0a8a0a; } .blu { color: #2222e0; }
.activate { position: absolute; left: 394px; top: 117px; color: #a8a8a8; white-space: nowrap; font-family: "Open Sans", sans-serif; }
.a1 { font-size: 19px; line-height: 26px; }
.a2 { font-size: 12.500px; line-height: 20px; }
.status { height: 2px; background: #007acc; flex: none; }
</style>
